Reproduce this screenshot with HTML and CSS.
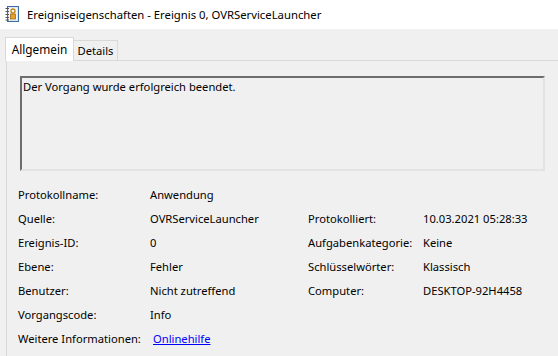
FILE: index.html
```html
<!DOCTYPE html>
<html lang="de">
<head>
<meta charset="utf-8">
<title>Ereigniseigenschaften</title>
<link rel="stylesheet" href="styles.css">
</head>
<body>
<div class="titlebar">
  <svg class="appicon" width="14" height="16" viewBox="0 0 14 16">
    <rect x="2.5" y="0.5" width="11" height="15" fill="#dce9f5" stroke="#3b6ea5"/>
    <rect x="4" y="2" width="8" height="12" fill="#f4f8fc"/>
    <g stroke="#555" stroke-width="1">
      <line x1="0.5" y1="2.5" x2="4" y2="2.5"/>
      <line x1="0.5" y1="5.5" x2="4" y2="5.5"/>
      <line x1="0.5" y1="8.5" x2="4" y2="8.5"/>
      <line x1="0.5" y1="11.5" x2="4" y2="11.5"/>
      <line x1="0.5" y1="14" x2="4" y2="14"/>
    </g>
    <circle cx="8" cy="5" r="2" fill="none" stroke="#c7861c" stroke-width="1.4"/>
    <rect x="5.5" y="8" width="5" height="5" fill="#e6a12a" stroke="#a86a12" stroke-width="0.8"/>
  </svg>
  <span class="title">Ereigniseigenschaften - Ereignis 0, OVRServiceLauncher</span>
</div>
<div class="window">
  <div class="tabs">
    <div class="tab active">Allgemein</div>
    <div class="tab">Details</div>
  </div>
  <div class="panel">
    <div class="message">Der Vorgang wurde erfolgreich beendet.</div>
    <div class="props">
      <span>Protokollname:</span><span>Anwendung</span><span></span><span></span>
      <span>Quelle:</span><span>OVRServiceLauncher</span><span>Protokolliert:</span><span>10.03.2021 05:28:33</span>
      <span>Ereignis-ID:</span><span>0</span><span>Aufgabenkategorie:</span><span>Keine</span>
      <span>Ebene:</span><span>Fehler</span><span>Schlüsselwörter:</span><span>Klassisch</span>
      <span>Benutzer:</span><span>Nicht zutreffend</span><span>Computer:</span><span>DESKTOP-92H4458</span>
      <span>Vorgangscode:</span><span>Info</span><span></span><span></span>
      <span>Weitere Informationen:</span><span><a class="link" href="#">Onlinehilfe</a></span><span></span><span></span>
    </div>
  </div>
</div>
</body>
</html>
```
FILE: styles.css
```css
html, body {
  margin: 0;
  padding: 0;
  width: 558px;
  height: 356px;
  overflow: hidden;
  background: #f0f0f0;
  font-family: "Noto Sans", "Open Sans", sans-serif;
  font-size: 11.2px;
  color: #000;
}
.titlebar {
  height: 29px;
  background: #fff;
  display: flex;
  align-items: center;
  padding-left: 5px;
  gap: 8px;
  box-sizing: border-box;
}
.appicon { flex: none; margin-top: -1px; }
.title { font-size: 11.3px; color: #000; }
.window {
  padding: 8px 0 0 5px;
}
.tabs {
  display: flex;
  align-items: flex-end;
  height: 23px;
}
.tab {
  box-sizing: border-box;
  height: 20px;
  width: 44px;
  text-align: center;
  border: 1px solid #d9d9d9;
  border-bottom: none;
  border-left: none;
  background: #f0f0f0;
  line-height: 20px;
}
.tab.active {
  width: 69px;
  height: 24px;
  margin-bottom: -1px;
  border-left: 1px solid #d9d9d9;
  background: #fff;
  line-height: 22px;
  font-size: 11.8px;
  position: relative;
  z-index: 1;
}
.panel {
  margin-left: 1px;
  border-top: 1px solid #d9d9d9;
  border-left: 1px solid #d9d9d9;
  padding: 15px 0 0 13px;
  height: 280px;
}
.message {
  box-sizing: border-box;
  width: 525px;
  height: 95px;
  border-top: 2px solid #6d6d6d;
  border-left: 2px solid #6d6d6d;
  border-right: 2px solid #e3e3e3;
  border-bottom: 2px solid #e3e3e3;
  padding: 1px 0 0 1px;
  line-height: 16px;
}
.props {
  margin-top: 11px;
  margin-left: -2px;
  display: grid;
  grid-template-columns: 132px 158px 115px auto;
  grid-auto-rows: 24px;
  align-items: center;
}
.link {
  color: #0000ff;
  text-decoration: underline;
  margin-left: 3px;
}
```
